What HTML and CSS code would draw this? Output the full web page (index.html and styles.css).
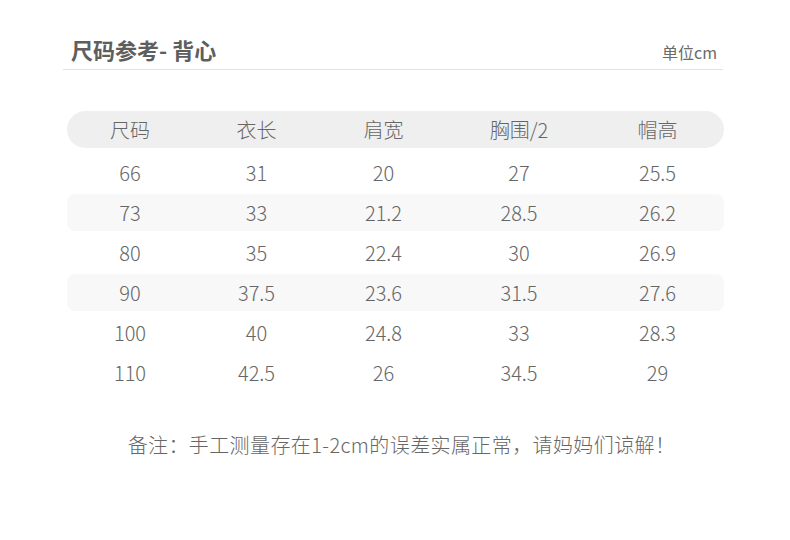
FILE: index.html
```html
<!DOCTYPE html>
<html lang="zh">
<head>
<meta charset="utf-8">
<link rel="stylesheet" href="styles.css">
</head>
<body>
<div class="page">
  <div class="head">
    <div class="title">尺码参考- 背心</div>
    <div class="unit">单位cm</div>
  </div>
  <div class="table">
    <div class="row thead"><span>尺码</span><span>衣长</span><span>肩宽</span><span>胸围/2</span><span>帽高</span></div>
    <div class="row"><span>66</span><span>31</span><span>20</span><span>27</span><span>25.5</span></div>
    <div class="row alt"><span>73</span><span>33</span><span>21.2</span><span>28.5</span><span>26.2</span></div>
    <div class="row"><span>80</span><span>35</span><span>22.4</span><span>30</span><span>26.9</span></div>
    <div class="row alt"><span>90</span><span>37.5</span><span>23.6</span><span>31.5</span><span>27.6</span></div>
    <div class="row"><span>100</span><span>40</span><span>24.8</span><span>33</span><span>28.3</span></div>
    <div class="row"><span>110</span><span>42.5</span><span>26</span><span>34.5</span><span>29</span></div>
  </div>
  <p class="note">备注：手工测量存在1-2cm的误差实属正常，请妈妈们谅解！</p>
</div>
</body>
</html>
```
FILE: styles.css
```css
html, body {
  margin: 0;
  padding: 0;
  background: #ffffff;
}
body {
  font-family: "Noto Sans CJK SC", "Noto Sans", sans-serif;
  color: #666666;
}
.page {
  width: 790px;
  height: 540px;
  overflow: hidden;
}
.head {
  margin: 0 67px 0 63px;
  padding: 0 6px 0 8px;
  height: 70px;
  box-sizing: border-box;
  display: flex;
  justify-content: space-between;
  align-items: flex-end;
  border-bottom: 1px solid #e2e2e2;
}
.title {
  font-size: 22px;
  line-height: 30px;
  margin-bottom: 5px;
  font-weight: 700;
  color: #5e5e5e;
}
.unit {
  font-size: 16px;
  line-height: 20px;
  margin-bottom: 7px;
  color: #6a6a6a;
}
.table {
  margin: 41px 0 0 67px;
  width: 657px;
  display: flex;
  flex-direction: column;
  gap: 3px;
}
.row {
  display: grid;
  grid-template-columns: 126px 127px 127px 144px 133px;
  height: 37px;
  align-items: center;
  font-size: 20px;
  font-weight: 300;
  color: #666666;
}
.row span {
  text-align: center;
  line-height: 37px;
}
.thead {
  background: #efefef;
  border-radius: 18.5px;
  margin-bottom: 3px;
}
.alt {
  background: #f8f8f8;
  border-radius: 8px;
}
.note {
  margin: 39px 0 0 0;
  padding-left: 13px;
  text-align: center;
  font-size: 20px;
  letter-spacing: 0.4px;
  line-height: 30px;
  font-weight: 300;
  color: #666666;
}
```
